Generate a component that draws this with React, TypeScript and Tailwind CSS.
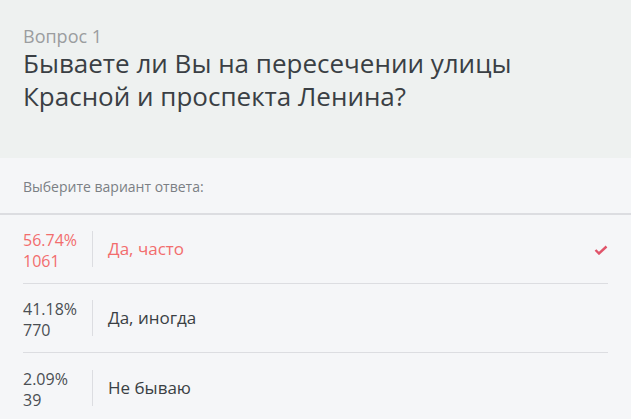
import React from "react";

const answers = [
  { pct: "56.74%", count: "1061", label: "Да, часто", chosen: true },
  { pct: "41.18%", count: "770", label: "Да, иногда", chosen: false },
  { pct: "2.09%", count: "39", label: "Не бываю", chosen: false },
];

export default function App() {
  return (
    <div className="w-[631px] h-[419px] overflow-hidden bg-[#f5f6f8] font-['Open_Sans',sans-serif]">
      <div className="h-[158px] bg-[#eef1f0] px-[23px] pt-[25px]">
        <div className="text-[18px] leading-[22px] text-[#9b9d9f]">Вопрос 1</div>
        <h1 className="text-[26px] leading-[33px] text-[#3a3f44]">
          Бываете ли Вы на пересечении улицы
          <br />
          Красной и проспекта Ленина?
        </h1>
      </div>
      <div className="h-[57px] px-[23px] pt-[18px] text-[14px] text-[#7b7f84] border-b-2 border-[#dcdde1]">
        Выберите вариант ответа:
      </div>
      <div className="px-[23px]">
        {answers.map((a, i) => (
          <div
            key={i}
            className={`flex items-center h-[69px] ${i < answers.length - 1 ? "border-b border-[#dcdde1]" : ""}`}
          >
            <div
              className={`w-[69px] pt-[4px] text-[16px] leading-[21px] ${a.chosen ? "text-[#f26d6d]" : "text-[#4a4e53]"}`}
            >
              <div>{a.pct}</div>
              <div>{a.count}</div>
            </div>
            <div className="h-[36px] w-px bg-[#dcdde1]" />
            <div
              className={`flex-1 pl-[15px] text-[17px] ${a.chosen ? "text-[#f26d6d]" : "text-[#3a3f44]"}`}
            >
              {a.label}
            </div>
            {a.chosen && (
              <svg width="14" height="10" viewBox="0 0 14 10" className="mt-[2px]">
                <path d="M1.5 5 L5 8.5 L12.5 1.5" fill="none" stroke="#e0546a" strokeWidth="2.4" />
              </svg>
            )}
          </div>
        ))}
      </div>
    </div>
  );
}
